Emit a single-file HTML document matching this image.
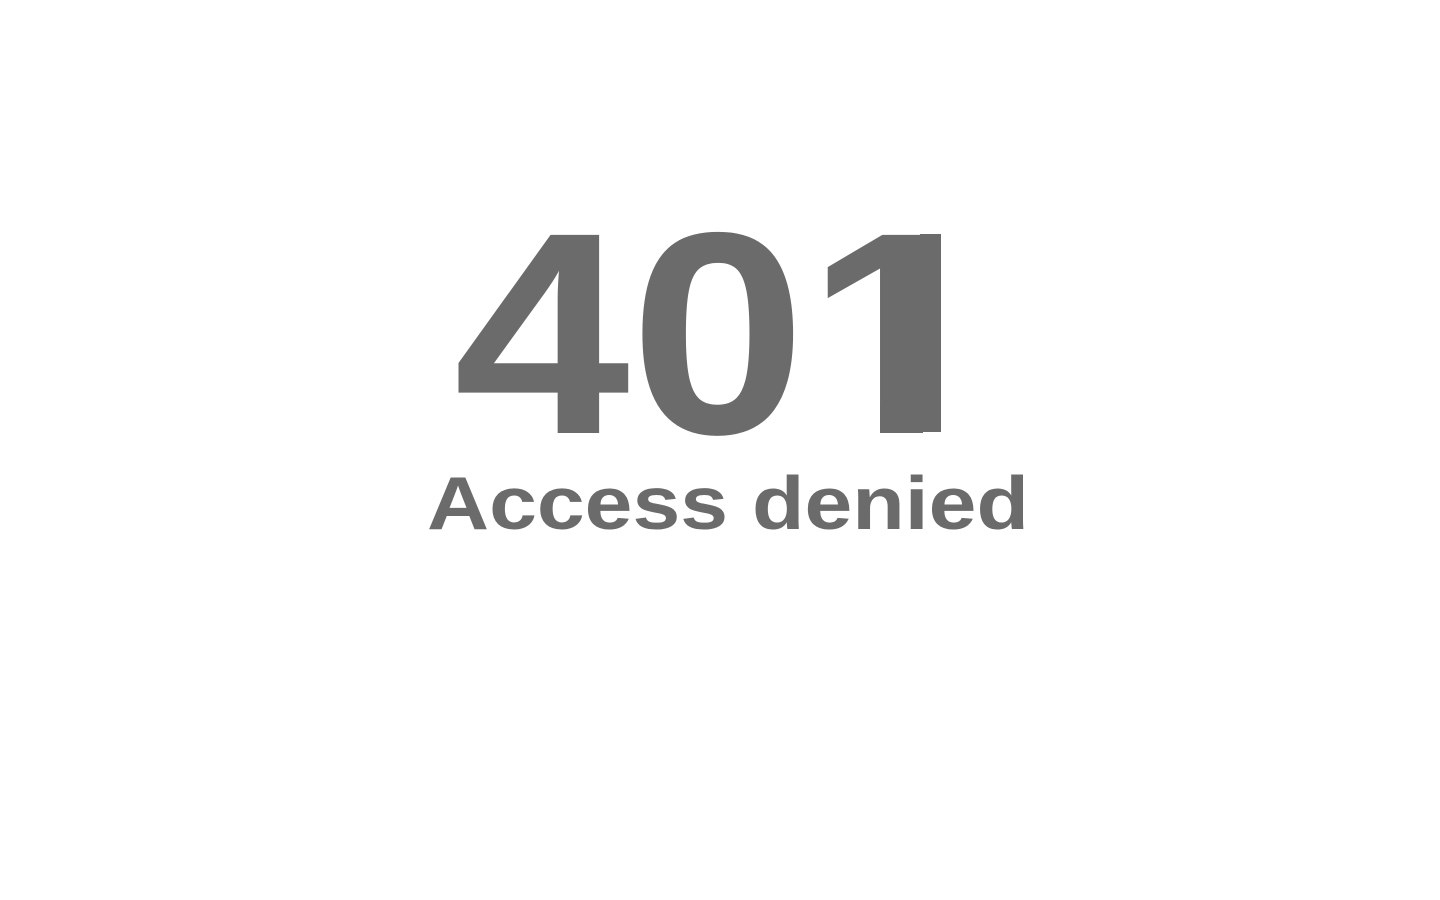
<!DOCTYPE html>
<html><head><meta charset="utf-8"><style>
html,body{margin:0;width:1440px;height:900px;background:#fff;overflow:hidden}
.t{position:absolute;left:0;width:1440px;text-align:center;font-family:"Liberation Sans",Arial,sans-serif;font-weight:bold;color:#6b6b6b;white-space:nowrap;transform-origin:720px 0}
.w{position:absolute;background:#fff}
</style></head><body>
<div class="t" style="top:190px;font-size:288px;line-height:288px;transform:scaleX(1.1);left:-2px">401</div>
<div class="w" style="left:818px;top:401px;width:62px;height:36px"></div>
<div class="w" style="left:923px;top:401px;width:60px;height:36px"></div>
<div style="position:absolute;left:920px;top:234px;width:21px;height:198px;background:#6b6b6b"></div>
<div class="t" style="top:466px;font-size:75px;line-height:75px;left:8px;transform:scaleX(1.146)">Access denied</div>
</body></html>
